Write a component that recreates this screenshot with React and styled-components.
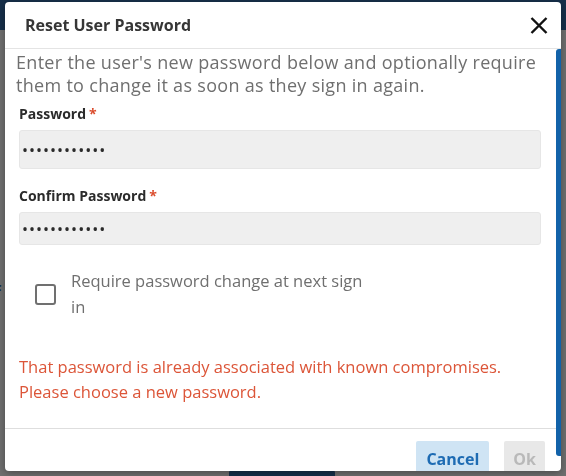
import React from 'react';
import styled, { createGlobalStyle } from 'styled-components';

const GlobalStyle = createGlobalStyle`
  html, body {
    margin: 0;
    padding: 0;
    height: 100%;
    overflow: hidden;
  }
  body {
    font-family: "Open Sans", "Liberation Sans", sans-serif;
  }
`;

// page behind the modal (already dimmed by the overlay)
const Page = styled.div`
  height: 476px;
  display: flex;
  flex-direction: column;
  background: #707070;
  overflow: hidden;
`;

const TopBar = styled.div`
  height: 30px;
  flex-shrink: 0;
  background: #17304b;
`;

const Behind = styled.div`
  flex: 1;
  display: flex;
  flex-direction: column;
  align-items: flex-start;
`;

const GhostText = styled.span`
  margin: 252px 0 0 -6px;
  font: 700 14px/16px "Open Sans", sans-serif;
  color: #15304b;
`;

const GhostButton = styled.div`
  margin: 172px 0 0 229px;
  width: 106px;
  height: 36px;
  flex-shrink: 0;
  background: #15304b;
  border-radius: 3px;
`;

const Dialog = styled.div`
  position: fixed;
  left: 5px;
  top: 2px;
  width: 556px;
  height: 469px;
  background: #fff;
  border-radius: 4px;
  box-shadow: 0 2px 8px rgba(0, 0, 0, 0.35);
  display: flex;
  flex-direction: column;
  overflow: hidden;
`;

const Header = styled.div`
  height: 46px;
  flex-shrink: 0;
  display: flex;
  align-items: center;
  justify-content: space-between;
  padding: 0 13px 0 20px;
  border-bottom: 1px solid #e4e4e4;
`;

const Title = styled.h2`
  margin: 0;
  font: 700 16px/22px "Open Sans", sans-serif;
  color: #363636;
`;

const CloseButton = styled.button`
  border: none;
  background: none;
  padding: 0;
  display: flex;
  cursor: pointer;
`;

const Scroll = styled.div`
  flex: 1;
  overflow: hidden;
  padding-right: 5px;
`;

// the scroll thumb sits over the right edge of the scrolling area
const ScrollThumb = styled.div`
  position: absolute;
  right: 0;
  top: 47px;
  width: 5px;
  height: 407px;
  background: #1262a9;
  border-radius: 3px 0 0 3px;
`;

const Body = styled.div`
  padding: 2px 15px 24px 14px;
  display: flex;
  flex-direction: column;
`;

const Intro = styled.p`
  margin: 0 0 0 -3px;
  font-size: 18px;
  line-height: 23px;
  letter-spacing: 0.3px;
  color: #6f6f6f;
`;

const Label = styled.label`
  display: block;
  margin-top: ${props => props.$gap}px;
  font: 700 14px/20px "Open Sans", sans-serif;
  color: #2b2b2b;

  span {
    color: #da4b2c;
    margin-left: 3px;
  }
`;

const Input = styled.input`
  display: block;
  box-sizing: border-box;
  width: 100%;
  height: ${props => props.$h}px;
  margin-top: 6px;
  padding: 0 2px;
  background: #efefef;
  border: 1px solid #e6e6e6;
  border-radius: 3px;
  font: 400 16px "Open Sans", sans-serif;
  letter-spacing: 1px;
  color: #2a2a2a;
  outline: none;
`;

const CheckRow = styled.div`
  margin-top: 23px;
  padding-left: 16px;
  display: flex;
  align-items: center;
  gap: 15px;
`;

const Box = styled.span`
  width: 21px;
  height: 21px;
  flex-shrink: 0;
  box-sizing: border-box;
  border: 2px solid #707070;
  border-radius: 3px;
  background: #fff;
`;

const CheckLabel = styled.span`
  width: 305px;
  font-size: 16.5px;
  line-height: 26px;
  color: #6f6f6f;
`;

const ErrorText = styled.p`
  margin: 34px 0 0;
  font-size: 16.5px;
  line-height: 25px;
  color: #dc5538;
`;

const Footer = styled.div`
  border-top: 1px solid #dedede;
  padding: 12px 11px;
  display: flex;
  justify-content: flex-end;
  gap: 15px;
`;

const Button = styled.button`
  height: 36px;
  padding: 0 ${props => props.$disabled ? 9 : 10}px;
  border: none;
  border-radius: 2px;
  font: 700 16px "Open Sans", sans-serif;
  background: ${props => props.$disabled ? "#e8e8e8" : "#cfe4f4"};
  color: ${props => props.$disabled ? "#b9b9b9" : "#1d6bb3"};
  cursor: ${props => props.$disabled ? "default" : "pointer"};
`;

const CloseIcon = () => (
  <svg width="18" height="17" viewBox="0 0 18 17">
    <path d="M1.5 1 L16.5 16 M16.5 1 L1.5 16" stroke="#111" strokeWidth="2.4" fill="none" />
  </svg>
);

export default function App() {
  return (
    <>
      <GlobalStyle />
      <Page>
        <TopBar />
        <Behind>
          <GhostText>F</GhostText>
          <GhostButton />
        </Behind>
      </Page>

      <Dialog role="dialog">
        <Header>
          <Title>Reset User Password</Title>
          <CloseButton aria-label="Close"><CloseIcon /></CloseButton>
        </Header>
        <Scroll>
          <Body>
            <Intro>
              Enter the user's new password below and optionally require them to change it as soon as they sign in again.
            </Intro>

            <Label $gap={7}>Password<span>*</span></Label>
            <Input type="password" readOnly value="secretpasswd" $h={39} />

            <Label $gap={17}>Confirm Password<span>*</span></Label>
            <Input type="password" readOnly value="secretpasswd" $h={33} />

            <CheckRow>
              <Box />
              <CheckLabel>Require password change at next sign in</CheckLabel>
            </CheckRow>

            <ErrorText>
              That password is already associated with known compromises.<br />
              Please choose a new password.
            </ErrorText>
          </Body>
          <Footer>
            <Button>Cancel</Button>
            <Button $disabled>Ok</Button>
          </Footer>
        </Scroll>
        <ScrollThumb />
      </Dialog>
    </>
  );
}
